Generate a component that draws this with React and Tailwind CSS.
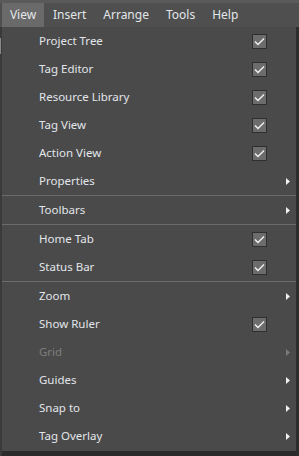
import React from 'react';

const MENUS = ['View', 'Insert', 'Arrange', 'Tools', 'Help'];

const ITEMS = [
  { label: 'Project Tree', check: true },
  { label: 'Tag Editor', check: true },
  { label: 'Resource Library', check: true },
  { label: 'Tag View', check: true },
  { label: 'Action View', check: true },
  { label: 'Properties', sub: true },
  { sep: true },
  { label: 'Toolbars', sub: true },
  { sep: true },
  { label: 'Home Tab', check: true },
  { label: 'Status Bar', check: true },
  { sep: true },
  { label: 'Zoom', sub: true },
  { label: 'Show Ruler', check: true },
  { label: 'Grid', sub: true, disabled: true },
  { label: 'Guides', sub: true },
  { label: 'Snap to', sub: true },
  { label: 'Tag Overlay', sub: true },
];

const CheckBox = () => (
  <div className="w-[15px] h-[15px] border border-[#2f2f2f] bg-[#6c6c6c] flex items-center justify-center">
    <svg width="13" height="13" viewBox="0 0 13 13">
      <polyline points="2,6.5 5,9.5 11,3.5" fill="none" stroke="#f2f2f2" strokeWidth="1.4" />
    </svg>
  </div>
);

const Arrow = ({ dim }) => (
  <svg width="4" height="7" viewBox="0 0 4 7">
    <polygon points="0,0 4,3.5 0,7" fill={dim ? '#7a7a7a' : '#f0f0f0'} />
  </svg>
);

const App = () => {
  return (
    <div className="w-[299px] h-[456px] bg-[#2a2a2a] flex flex-col overflow-hidden font-['Noto_Sans',sans-serif] text-[11.5px]">
      {/* Menu bar */}
      <div className="h-[3px] bg-[#5a5a5a]" />
      <div className="h-[24px] bg-[#4f4f4f] flex items-stretch pl-[2px] text-[#e2e6ea] text-[12px]">
        {MENUS.map((m, i) => (
          <div
            key={m}
            className={`px-[8px] flex items-center ${i === 0 ? 'bg-[#6a6a6a] w-[42px] justify-center' : 'ml-[1px]'}`}
          >
            {m}
          </div>
        ))}
      </div>

      <div className="flex flex-1">
        <div className="w-[2px] bg-[#3a3a3a] relative">
          <div className="absolute left-0 top-[11px] w-[1px] h-[16px] bg-[#8a8a8a]" />
        </div>

        {/* Dropdown */}
        <div className="w-[294px] h-[424px] bg-[#4a4a4a] flex flex-col">
          {ITEMS.map((it, i) =>
            it.sep ? (
              <div key={i} className="h-px bg-[#6c6c6c]" />
            ) : (
              <div key={i} className="h-[28px] flex items-center pl-[37px] pr-[6px]">
                <span className={`flex-1 ${it.disabled ? 'text-[#7d7d7d]' : 'text-[#e2e6ea]'}`}>{it.label}</span>
                {it.check && (
                  <div className="mr-[23px]">
                    <CheckBox />
                  </div>
                )}
                {it.sub && <Arrow dim={it.disabled} />}
              </div>
            )
          )}
        </div>

        <div className="flex-1 bg-[#2d2d2d]" />
      </div>
    </div>
  );
};

export default App;
